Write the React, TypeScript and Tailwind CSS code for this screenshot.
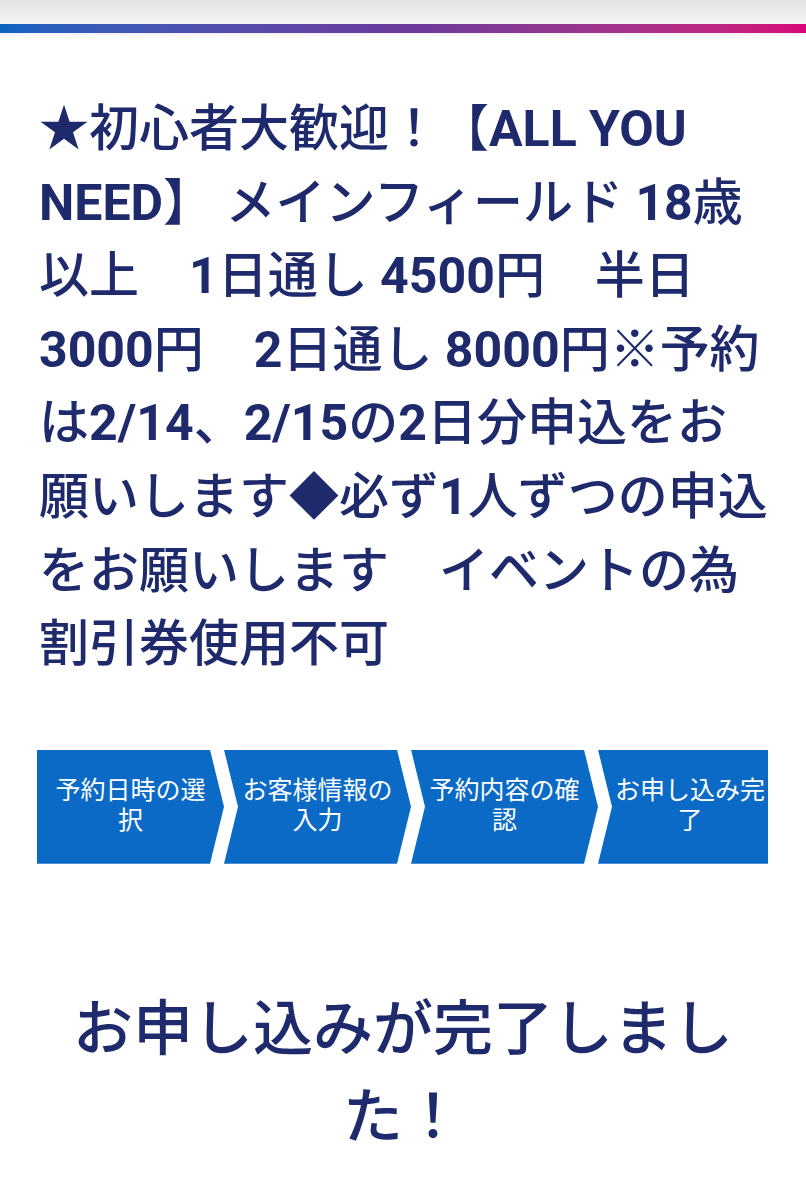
import React from "react";

const steps = [
  { lines: ["予約日時の選", "択"], w: "w-[187px]", clip: "[clip-path:polygon(0_0,calc(100%-14px)_0,100%_50%,calc(100%-14px)_100%,0_100%)]", pad: "px-[14px]" },
  { lines: ["お客様情報の", "入力"], w: "w-[187px]", clip: "[clip-path:polygon(0_0,calc(100%-14px)_0,100%_50%,calc(100%-14px)_100%,0_100%,14px_50%)]", pad: "px-[14px]" },
  { lines: ["予約内容の確", "認"], w: "w-[187px]", clip: "[clip-path:polygon(0_0,calc(100%-14px)_0,100%_50%,calc(100%-14px)_100%,0_100%,14px_50%)]", pad: "px-[14px]" },
  { lines: ["お申し込み完", "了"], w: "w-[170px]", clip: "[clip-path:polygon(0_0,100%_0,100%_100%,0_100%,14px_50%)]", pad: "pl-[14px]" },
];

const titleLines = [
  "★初心者大歓迎！【ALL YOU",
  "NEED】 メインフィールド 18歳",
  "以上　1日通し 4500円　半日",
  "3000円　2日通し 8000円※予約",
  "は2/14、2/15の2日分申込をお",
  "願いします◆必ず1人ずつの申込",
  "をお願いします　イベントの為",
  "割引券使用不可",
];

function Line({ text }: { text: string }) {
  const parts = text.split(/([A-Za-z0-9/ ※]+)/).filter((p) => p.length > 0);
  return (
    <div>
      {parts.map((p, i) =>
        /^[A-Za-z0-9/ ※]+$/.test(p) ? (
          <span key={i} className="font-bold">{p}</span>
        ) : (
          <span key={i} className="font-medium">{p}</span>
        )
      )}
    </div>
  );
}

export default function App() {
  return (
    <div className="min-h-[1200px] w-[806px] bg-white" style={{ fontFamily: 'Roboto, "Noto Sans CJK JP", sans-serif' }}>
      <div className="h-[24px] bg-gradient-to-b from-[#e2e2e2] to-[#f4f4f4]" />
      <div className="h-[9px] bg-gradient-to-r from-[#0a64c2] via-[#6a3a9c] to-[#d6037a]" />
      <div className="h-[4px] bg-gradient-to-b from-[#f4eef6] to-white" />
      <div className="px-[37px]">
        <h1 className="mt-[56px] pl-[2px] text-[50px] leading-[73.6px] text-[#1f2a6c] whitespace-nowrap">
          {titleLines.map((l, i) => (
            <Line key={i} text={l} />
          ))}
        </h1>
        <div className="mt-[68px] flex h-[114px]">
          {steps.map((s, i) => (
            <div
              key={i}
              className={`${s.w} ${s.clip} ${s.pad} shrink-0 bg-[#0b6ac6] flex flex-col items-center justify-center text-white text-[25px] leading-[30px] font-normal pb-[2px]`}
            >
              {s.lines.map((l, j) => (
                <div key={j}>{l}</div>
              ))}
            </div>
          ))}
        </div>
        <h2 className="mt-[122px] px-[20px] text-center text-[60px] leading-[88px] font-medium text-[#1f2a6c]">
          お申し込みが完了しました！
        </h2>
      </div>
    </div>
  );
}
